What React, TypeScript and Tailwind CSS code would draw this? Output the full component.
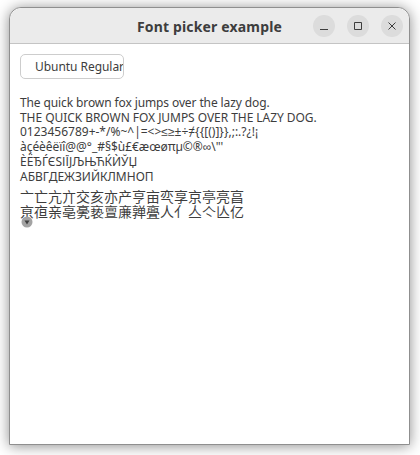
import React from 'react';

const lines = [
  { text: 'The quick brown fox jumps over the lazy dog.', tracking: 'tracking-[-0.11px]' },
  { text: 'THE QUICK BROWN FOX JUMPS OVER THE LAZY DOG.', tracking: 'tracking-[-0.05px]' },
  { text: '0123456789+-*/%~^|=<>≤≥±÷≠{{[()]}},;:.?¿!¡', tracking: 'tracking-normal' },
  { text: 'àçéèêëïî@@°_#§$ù£€æœøπµ©®∞\\"\'', tracking: 'tracking-[-0.05px]' },
  { text: 'ÈËЂЃЄЅІЇЈЉЊЋЌЍЎЏ', tracking: 'tracking-normal' },
  { text: 'АБВГДЕЖЗИЙКЛМНОП', tracking: 'tracking-normal' },
];

const cjkLines = ['亠亡亢亣交亥亦产亨亩亪享京亭亮亯', '亰亱亲亳亴亵亶亷亸亹人亻亼亽亾亿'];

function WindowButton({ children }: { children: React.ReactNode }) {
  return (
    <div className="flex h-[22px] w-[22px] items-center justify-center rounded-full bg-[#dcdcdc] text-[#3d3d3d]">
      <svg width="12" height="12" viewBox="0 0 12 12" fill="none" stroke="currentColor" strokeWidth="1">
        {children}
      </svg>
    </div>
  );
}

export default function App() {
  return (
    <div className="h-[455px] w-[420px] overflow-hidden bg-white pb-[10px] pl-[9px] pr-[10px] pt-[7px] font-['Noto_Sans',sans-serif]">
      <div className="flex h-full flex-col rounded-t-[12px] border border-[#8f8f8f] bg-white shadow-[0_1px_14px_rgba(0,0,0,0.45)]">
        <div className="relative flex h-[36px] shrink-0 items-center justify-end gap-[12px] rounded-t-[12px] border-b border-[#c4c4c4] bg-[#ebebeb] pr-[6px]">
          <div className="absolute inset-x-0 top-0 flex h-full items-center justify-center pt-[1px] text-[14px] font-bold tracking-[0.16px] text-[#3d3d3d]">
            Font picker example
          </div>
          <WindowButton>
            <path d="M2 9.5h8" />
          </WindowButton>
          <WindowButton>
            <path d="M2.5 2.5h7v7h-7z" />
          </WindowButton>
          <WindowButton>
            <path d="M2.5 2.5l7 7M9.5 2.5l-7 7" />
          </WindowButton>
        </div>
        <div className="flex flex-1 flex-col px-[10px] pt-[10px] text-[#3d3d3d]">
          <div className="flex h-[25px] w-[104px] items-center overflow-hidden whitespace-nowrap rounded-[5px] border border-[#cdcdcd] bg-white pl-[14px] text-[12px] leading-none tracking-[-0.05px]">
            Ubuntu Regular
          </div>
          <div className="mt-[17px] text-[12px] leading-[14.7px] whitespace-nowrap">
            {lines.map((line) => (
              <div key={line.text} className={line.tracking}>
                {line.text}
              </div>
            ))}
          </div>
          <div className="mt-[5px] font-['Noto_Sans_CJK_SC',sans-serif] text-[14px] leading-[14.7px] whitespace-nowrap">
            {cjkLines.map((line) => (
              <div key={line}>{line}</div>
            ))}
          </div>
          <svg className="relative -mt-[3px] ml-[1px]" width="12" height="12" viewBox="0 0 12 12">
            <circle cx="6" cy="6" r="5.5" fill="#a3a3a3" />
            <path d="M3.5 4.5h5L6 8.5z" fill="#3f3f3f" />
          </svg>
        </div>
      </div>
    </div>
  );
}
